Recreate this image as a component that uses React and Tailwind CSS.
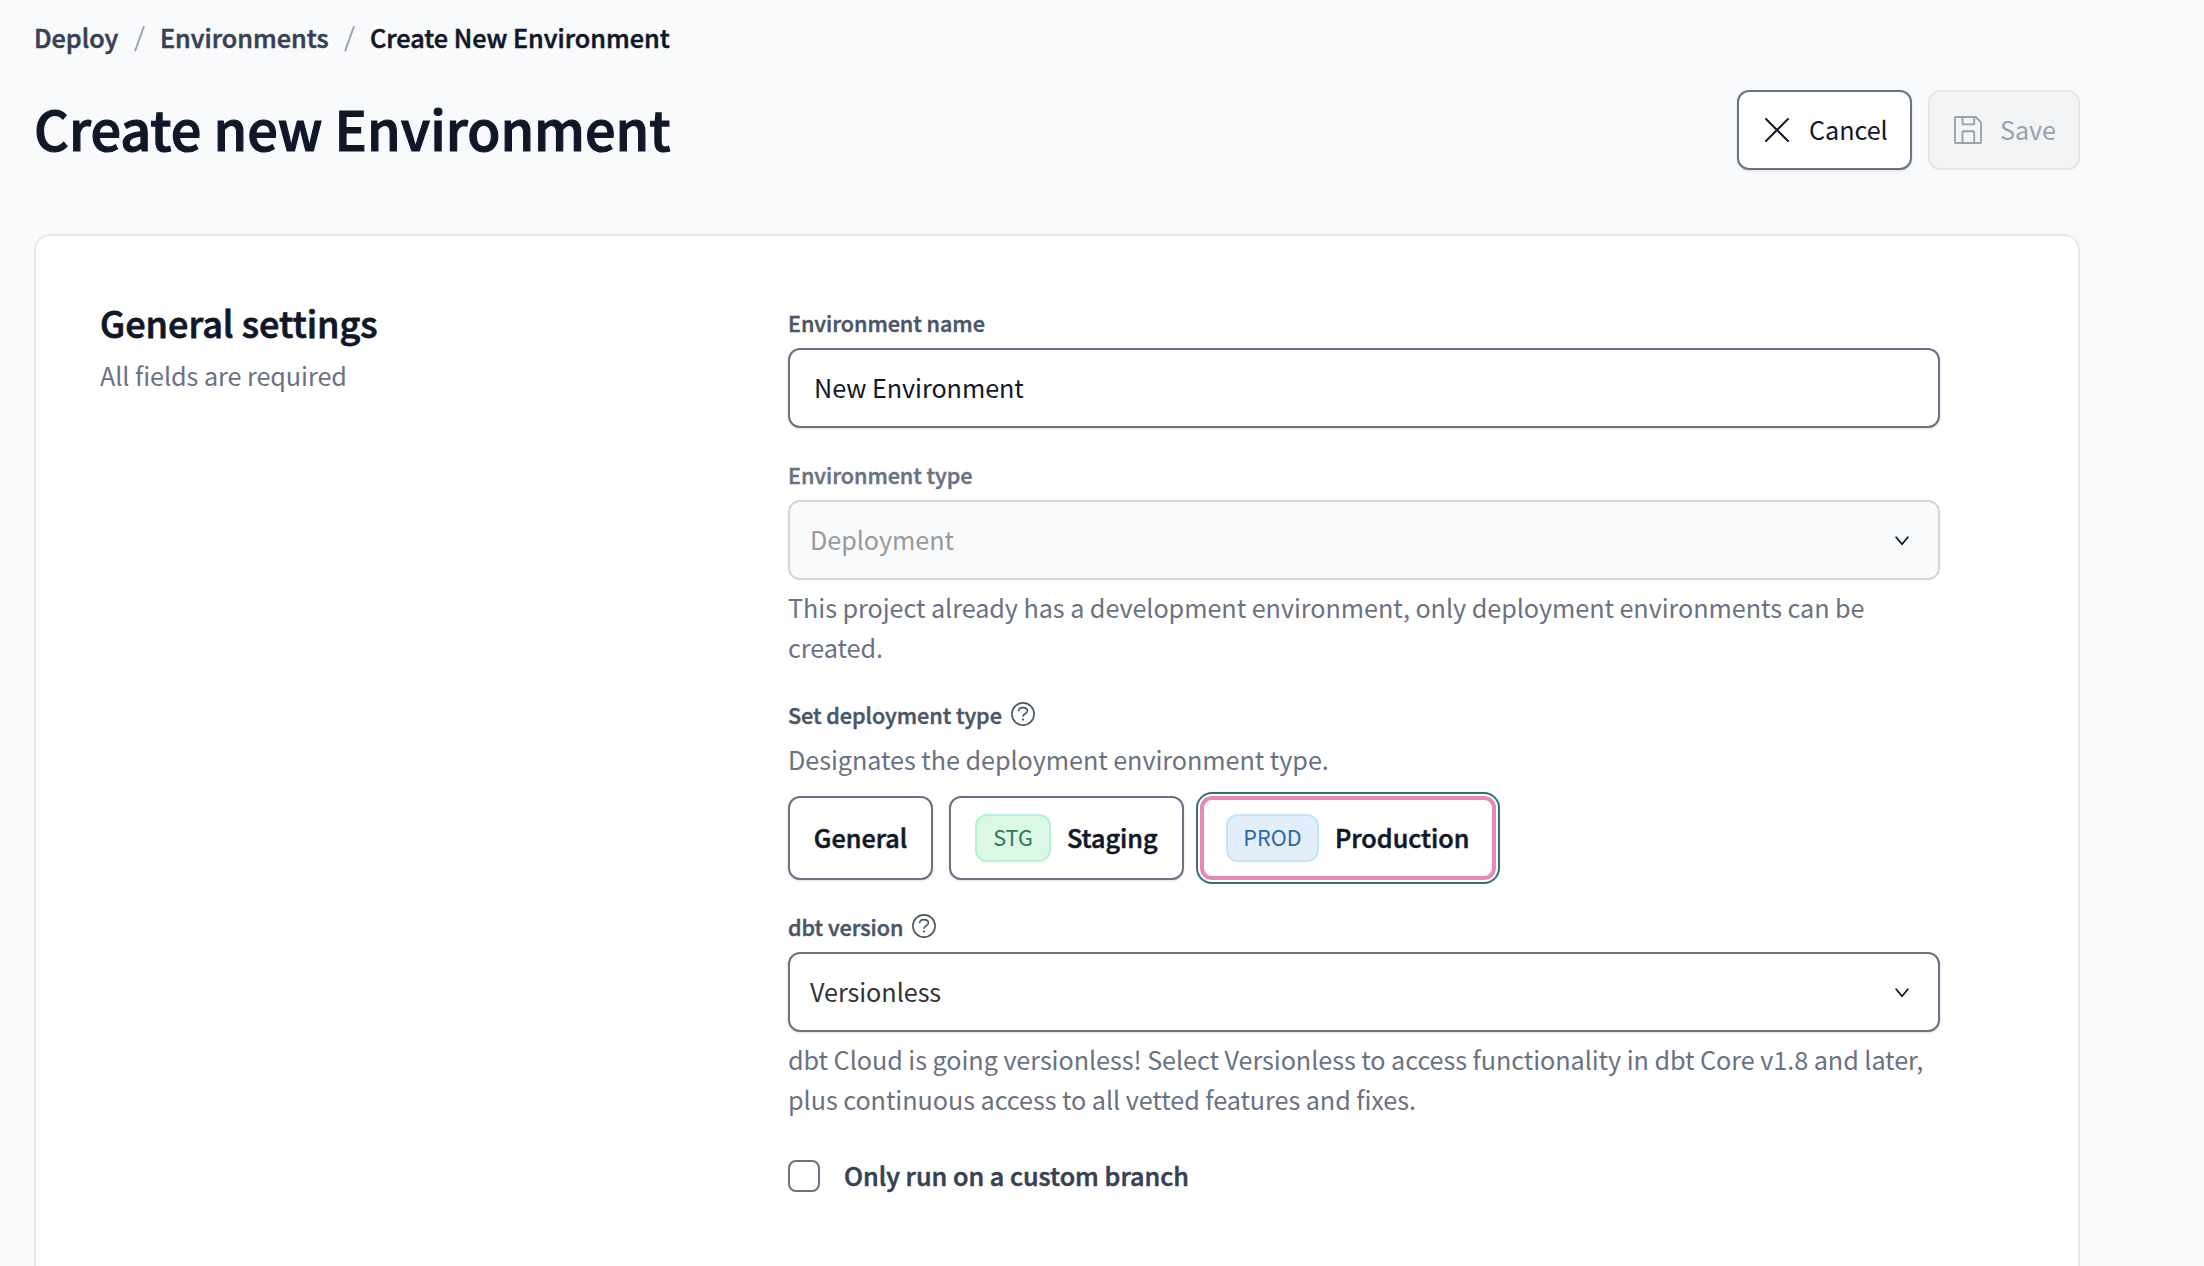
function HelpIcon() {
  return (
    <svg className="size-6 text-gray-600" viewBox="0 0 24 24" fill="none" stroke="currentColor" strokeWidth="1.6" strokeLinecap="round">
      <circle cx="12" cy="12" r="11.1" />
      <path d="M7.7 8.7C7.8 6.8 9.5 5.6 12 5.6s4.4 1.3 4.4 3.3c0 2.9-4.3 2.7-4.3 5.4" />
      <circle cx="12" cy="17.6" r="1.1" fill="currentColor" stroke="none" />
    </svg>
  );
}

function ChevronIcon() {
  return (
    <svg className="mt-px h-[10px] w-[14px] text-gray-900" viewBox="0 0 14 10" fill="none" stroke="currentColor" strokeWidth="1.8" strokeLinecap="round" strokeLinejoin="round">
      <path d="M1.2 1.3 7 8.3l5.8-7" />
    </svg>
  );
}

function CloseIcon() {
  return (
    <svg className="size-6" viewBox="0 0 24 24" fill="none" stroke="currentColor" strokeWidth="2" strokeLinecap="round">
      <path d="M1 1l22 22M23 1 1 23" />
    </svg>
  );
}

function SaveIcon() {
  return (
    <svg className="size-7" viewBox="0 0 28 28" fill="none" stroke="currentColor" strokeWidth="1.9" strokeLinejoin="round">
      <path d="M2 1h19.8L27 6.4V26a1 1 0 0 1-1 1H2a1 1 0 0 1-1-1V2a1 1 0 0 1 1-1Z" />
      <path d="M8.5 1v6.4a1 1 0 0 0 1 1h9.7a1 1 0 0 0 1-1V1" />
      <path d="M8.5 27V16.2a1 1 0 0 1 1-1h9.7a1 1 0 0 1 1 1V27" />
    </svg>
  );
}

function Slash() {
  return (
    <svg className="mt-[3px] h-7 w-[11px] text-gray-400" viewBox="0 0 11 28" stroke="currentColor" strokeWidth="1.9">
      <path d="M1 26.2 10 1.2" />
    </svg>
  );
}

function Label({ children, help, className = "text-gray-600" }) {
  return (
    <div className={`flex h-8 items-center gap-[9px] text-[21.6px] leading-8 font-medium [-webkit-text-stroke:0.022em] ${className}`}>
      <span>{children}</span>
      {help && (
        <span className="-mt-[3px]">
          <HelpIcon />
        </span>
      )}
    </div>
  );
}

function Select({ value, disabled }) {
  return (
    <button
      type="button"
      disabled={disabled}
      className={`mt-[9px] flex h-20 w-full items-center justify-between rounded-xl border-2 pr-[29px] pl-5 ${
        disabled ? "border-gray-300 bg-gray-50 text-[#999999]" : "border-gray-500 bg-white text-[#333333] shadow-sm"
      }`}
    >
      <span className="pb-0.5">{value}</span>
      <ChevronIcon />
    </button>
  );
}

function Help({ children }) {
  return <p className="mt-[7px] text-gray-500">{children}</p>;
}

export default function App() {
  return (
    <main className="h-screen overflow-hidden bg-gray-50 pt-[17px] pr-[124px] pl-[34px] font-['Noto_Sans_CJK_SC','Noto_Sans',sans-serif] text-[25.2px] leading-10 tracking-[-0.0022em] text-gray-900">
      <nav className="flex h-10 items-center font-medium tracking-normal [-webkit-text-stroke:0.022em]">
        <a className="w-[100px] text-gray-700">Deploy</a>
        <Slash />
        <a className="ml-[15px] w-[184px] text-gray-700">Environments</a>
        <Slash />
        <span className="ml-[15px]">Create New Environment</span>
      </nav>

      <header className="mt-[33px] flex h-20 items-center justify-between">
        <h1 className="pb-[5px] text-[54px] leading-[80px] font-medium tracking-normal [-webkit-text-stroke:0.022em]">Create new Environment</h1>
        <div className="flex gap-4">
          <button type="button" className="flex h-20 w-[175px] items-center gap-5 rounded-xl border-2 border-gray-500 bg-white pl-[26px] shadow-sm">
            <CloseIcon />
            <span className="pb-0.5">Cancel</span>
          </button>
          <button type="button" disabled className="flex h-20 w-[152px] items-center gap-[18px] rounded-xl border-2 border-gray-200 bg-gray-100 pl-6 text-gray-400">
            <SaveIcon />
            <span className="pb-0.5">Save</span>
          </button>
        </div>
      </header>

      <section className="mt-16 flex h-[1100px] rounded-2xl border-2 border-gray-200 bg-white pl-16">
        <div className="w-[688px] shrink-0 pt-[62px]">
          <h2 className="text-[36px] leading-[48px] font-medium tracking-normal [-webkit-text-stroke:0.022em]">General settings</h2>
          <p className="mt-[9px] text-gray-500">All fields are required</p>
        </div>

        <form className="w-[1152px] pt-[71px]">
          <Label>Environment name</Label>
          <input
            defaultValue="New Environment"
            className="mt-[9px] block h-20 w-full rounded-xl border-2 border-gray-500 bg-white pb-0.5 pl-6 shadow-sm outline-none"
          />

          <div className="mt-[31px]">
            <Label className="text-gray-500">Environment type</Label>
            <Select value="Deployment" disabled />
            <Help>
              This project already has a development environment, only deployment environments can be
              <br />
              created.
            </Help>
          </div>

          <div className="mt-8">
            <Label help>Set deployment type</Label>
            <p className="mt-2 text-gray-500">Designates the deployment environment type.</p>
            <div className="mt-[17px] flex gap-4 font-medium tracking-normal">
              <button type="button" className="h-[84px] w-[145px] rounded-xl border-2 border-gray-500 bg-white pb-0.5 shadow-sm [-webkit-text-stroke:0.022em]">
                General
              </button>
              <button type="button" className="flex h-[84px] w-[235px] items-center gap-4 rounded-xl border-2 border-gray-500 bg-white pl-6 shadow-sm">
                <span className="flex h-12 w-[76px] items-center justify-center rounded-xl border-2 border-[#b5f2cf] bg-[#dbf8e6] pb-[3px] text-[21.6px] font-normal text-[#2f7a56]">
                  STG
                </span>
                <span className="pb-0.5 [-webkit-text-stroke:0.022em]">Staging</span>
              </button>
              <button
                type="button"
                className="flex h-[84px] w-[296px] items-center gap-4 rounded-xl border-4 border-[#e888b4] bg-white pl-[22px] shadow-[0_0_0_2px_#ffffff,0_0_0_4px_#2f7175]"
              >
                <span className="flex h-12 w-[93px] items-center justify-center rounded-xl border-2 border-[#bfe5fb] bg-[#e2effb] pb-[3px] text-[21.6px] font-normal text-[#2a69a8]">
                  PROD
                </span>
                <span className="pb-0.5 [-webkit-text-stroke:0.022em]">Production</span>
              </button>
            </div>
          </div>

          <div className="mt-[31px]">
            <Label help>dbt version</Label>
            <Select value="Versionless" />
            <Help>
              dbt Cloud is going versionless! Select Versionless to access functionality in dbt Core v1.8 and later,
              <br />
              plus continuous access to all vetted features and fixes.
            </Help>
          </div>

          <label className="mt-[37px] flex h-10 items-center gap-6 font-medium tracking-normal text-gray-700">
            <input type="checkbox" className="size-8 appearance-none rounded-lg border-2 border-gray-500 bg-white" />
            <span className="pb-0.5 [-webkit-text-stroke:0.022em]">Only run on a custom branch</span>
          </label>
        </form>
      </section>
    </main>
  );
}
